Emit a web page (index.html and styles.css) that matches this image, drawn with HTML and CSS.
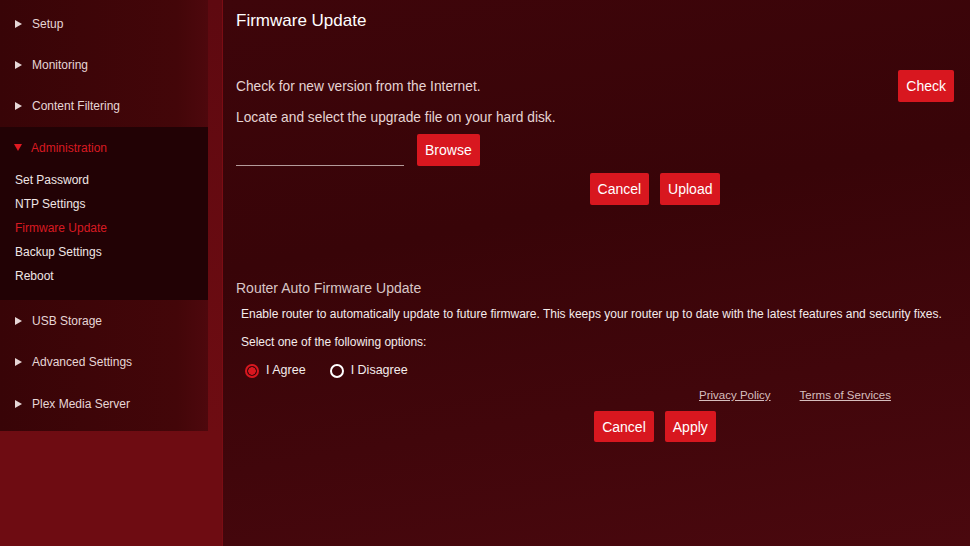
FILE: index.html
```html
<!DOCTYPE html>
<html lang="en">
<head>
  <meta charset="UTF-8">
  <meta name="viewport" content="width=device-width, initial-scale=1.0" />
  <title>Firmware Update</title>
  <link rel="stylesheet" href="styles.css">
</head>
<body>
  <aside class="sidebar">
    <ul class="menu">
      <li class="menu-item"><span class="arrow"></span>Setup</li>
      <li class="menu-item"><span class="arrow"></span>Monitoring</li>
      <li class="menu-item"><span class="arrow"></span>Content Filtering</li>
      <li class="menu-group">
        <div class="menu-item active"><span class="arrow down"></span>Administration</div>
        <ul class="submenu">
          <li>Set Password</li>
          <li>NTP Settings</li>
          <li class="current">Firmware Update</li>
          <li>Backup Settings</li>
          <li>Reboot</li>
        </ul>
      </li>
      <li class="menu-item"><span class="arrow"></span>USB Storage</li>
      <li class="menu-item"><span class="arrow"></span>Advanced Settings</li>
      <li class="menu-item"><span class="arrow"></span>Plex Media Server</li>
    </ul>
  </aside>

  <main class="main">
    <h2 class="page-title">Firmware Update</h2>

    <div class="check-row">
      <p>Check for new version from the Internet.</p>
      <button class="btn">Check</button>
    </div>

    <p class="locate">Locate and select the upgrade file on your hard disk.</p>
    <div class="file-row">
      <input type="text" class="file-input">
      <button class="btn">Browse</button>
    </div>

    <div class="actions">
      <button class="btn">Cancel</button>
      <button class="btn">Upload</button>
    </div>

    <section class="auto-update">
      <h3>Router Auto Firmware Update</h3>
      <p class="desc">Enable router to automatically update to future firmware. This keeps your router up to date with the latest features and security fixes.</p>
      <p class="desc select">Select one of the following options:</p>
      <div class="radios">
        <label class="radio"><span class="dot checked"></span>I Agree</label>
        <label class="radio"><span class="dot"></span>I Disagree</label>
      </div>
      <div class="links">
        <a href="#">Privacy Policy</a>
        <a href="#">Terms of Services</a>
      </div>
      <div class="actions apply">
        <button class="btn">Cancel</button>
        <button class="btn">Apply</button>
      </div>
    </section>
  </main>
</body>
</html>
```

FILE: styles.css
```css
* {
  box-sizing: border-box;
  margin: 0;
  padding: 0;
  font-family: 'Liberation Sans', Arial, sans-serif;
}

html, body {
  height: 100%;
}

body {
  display: flex;
  gap: 14px;
  align-items: flex-start;
  background: linear-gradient(to bottom, #5e0910, #6e0c12 80%);
  overflow: hidden;
}

/* sidebar */

.sidebar {
  width: 208px;
  flex-shrink: 0;
  padding: 3px 0 7px;
  background: linear-gradient(to right, #380407, #430609 85%, #4e080d);
}

.menu {
  list-style: none;
}

.menu-item {
  height: 41.33px;
  display: flex;
  align-items: center;
  padding-left: 15px;
  font-size: 12px;
  color: #e6d6d6;
}

.arrow {
  width: 0;
  height: 0;
  border-top: 4.5px solid transparent;
  border-bottom: 4.5px solid transparent;
  border-left: 7px solid #e6d6d6;
  margin-right: 10px;
}

.arrow.down {
  border-left: 4.5px solid transparent;
  border-right: 4.5px solid transparent;
  border-top: 7px solid #e01a22;
  border-bottom: 0;
  margin-left: -1px;
  margin-right: 9px;
}

.menu-group {
  background: #220205;
  padding-bottom: 12px;
}

.menu-item.active {
  color: #d81a22;
}

.submenu {
  list-style: none;
}

.submenu li {
  height: 24px;
  line-height: 24px;
  padding-left: 15px;
  font-size: 12px;
  color: #f0e6e6;
}

.submenu li.current {
  color: #d81a22;
}

/* main panel */

.main {
  flex: 1;
  min-width: 0;
  height: 546px;
  overflow: hidden;
  padding: 9px 16px 0 13px;
  border-left: 1px solid #7a0d14;
  background: linear-gradient(170deg, #3e050a 0%, #380408 40%, #4a080e 100%);
  color: #e6d4d4;
}

.page-title {
  font-size: 17px;
  font-weight: normal;
  color: #fff;
  height: 24px;
  line-height: 24px;
}

.check-row {
  margin-top: 37px;
  display: flex;
  justify-content: space-between;
  align-items: center;
}

.check-row p,
.locate {
  font-size: 13.75px;
}

.locate {
  margin-top: 8px;
  line-height: 16px;
}

.file-row {
  margin-top: 8px;
  display: flex;
  align-items: center;
  gap: 13px;
}

.file-input {
  width: 168px;
  height: 32px;
  background: transparent;
  border: 0;
  border-bottom: 1px solid #b49a9a;
  outline: none;
}

.btn {
  height: 32px;
  padding: 0 8px;
  border: 0;
  border-radius: 2px;
  background: #d8171f;
  color: #fff;
  font-size: 14px;
}

.actions {
  width: 838px;
  margin-top: 7px;
  display: flex;
  justify-content: center;
  gap: 11px;
}

.auto-update {
  margin-top: 75px;
}

.auto-update h3 {
  font-size: 14px;
  font-weight: normal;
  color: #d8c6c6;
  line-height: 16px;
}

.desc {
  margin-top: 11px;
  padding-left: 5px;
  font-size: 12px;
  color: #f4ecec;
  line-height: 15px;
}

.desc.select {
  margin-top: 13px;
}

.radios {
  margin-top: 12px;
  padding-left: 9px;
  display: flex;
  gap: 24px;
  font-size: 12.5px;
  color: #f4ecec;
}

.radio {
  display: flex;
  align-items: center;
  gap: 7px;
}

.dot {
  width: 14px;
  height: 14px;
  border-radius: 50%;
  border: 2px solid #fff;
  margin-top: 2px;
}

.dot.checked {
  border-color: #d8171f;
  background: radial-gradient(circle, #d8171f 0 3.5px, transparent 4px);
}

.links {
  margin-top: 11px;
  padding-left: 463px;
  display: flex;
  gap: 29px;
  font-size: 11.5px;
}

.links a {
  color: #d6bebe;
}

.actions.apply {
  margin-top: 10px;
}

.actions.apply .btn {
  height: 31px;
}
```
